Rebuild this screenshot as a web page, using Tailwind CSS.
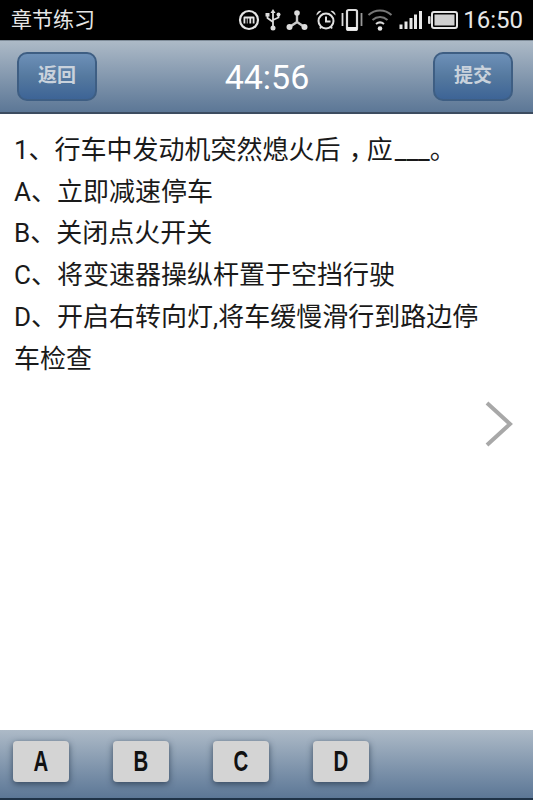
<!DOCTYPE html>
<html lang="zh-CN">
<head>
    <meta charset="UTF-8">
    <meta name="viewport" content="width=device-width, initial-scale=1.0">
    <title>章节练习</title>
    <script src="https://cdn.jsdelivr.net/npm/@tailwindcss/browser@4"></script>
</head>
<body class="bg-white overflow-hidden font-['Roboto','Noto_Sans_CJK_SC',sans-serif]">
<div class="flex flex-col w-[533px] h-[800px]">

    <!-- status bar -->
    <div class="flex items-center justify-between h-[40px] bg-black text-[#e6e6e6] shrink-0">
        <span class="ml-[11px] text-[21px] leading-none">章节练习</span>
        <div class="flex items-center mr-[10px]">
            <svg class="w-[22px] h-[22px]" viewBox="0 0 22 22" fill="none">
                <circle cx="11" cy="11" r="9" stroke="#e4e4e4" stroke-width="2.200"/>
                <path d="M5.500 14.500V8.500a1 1 0 0 1 1-1h9a1 1 0 0 1 1 1v6h-1.800V9.500h-1.500v5h-1.800v-5h-1.800v5H8.800v-5H7.300v5z" fill="#e4e4e4"/>
            </svg>
            <svg class="w-[16px] h-[24px] ml-[5px]" viewBox="0 0 16 24" fill="none" stroke="#ddd" stroke-width="1.800">
                <path d="M8 4v15M2.500 7.500v2.500l5.500 4M13.500 7v2.500L8 12"/>
                <path d="M8 1l2.500 4h-5z" fill="#ddd" stroke="none"/>
                <rect x="0.500" y="5" width="4" height="3.500" fill="#ddd" stroke="none"/>
                <circle cx="13.500" cy="6.500" r="2" fill="#ddd" stroke="none"/>
                <circle cx="8" cy="20" r="2.500" fill="#ddd" stroke="none"/>
            </svg>
            <svg class="w-[22px] h-[22px] ml-[5px]" viewBox="0 0 22 22" fill="none" stroke="#c8c8c8" stroke-width="2.400">
                <path d="M11 4v9L3.500 18M11 13l7.500 5"/>
                <circle cx="11" cy="4" r="2.800" fill="#ddd" stroke="none"/>
                <circle cx="3.500" cy="18" r="3" fill="#ddd" stroke="none"/>
                <circle cx="18.500" cy="18" r="3" fill="#ddd" stroke="none"/>
            </svg>
            <svg class="w-[22px] h-[22px] ml-[7px]" viewBox="0 0 22 22" fill="none" stroke="#e0e0e0" stroke-width="2">
                <circle cx="11" cy="12" r="7.500"/>
                <path d="M11 7.500v5h4.500M5 19.500l1.500-2M17 19.500l-1.500-2"/>
                <path d="M1.500 6.500a4 4 0 0 1 5-4.500zM20.500 6.500a4 4 0 0 0-5-4.500z" fill="#e0e0e0" stroke="none"/>
            </svg>
            <svg class="w-[22px] h-[24px] ml-[4px]" viewBox="0 0 22 24" fill="none" stroke="#ddd">
                <rect x="6" y="2" width="10" height="20" rx="1.500" stroke-width="2.200"/>
                <path d="M6 20.500h10" stroke="#f0f0f0" stroke-width="3"/>
                <path d="M1.500 5v13" stroke-width="1.800"/>
                <path d="M20.500 5v13" stroke="#999" stroke-width="1.800"/>
            </svg>
            <svg class="w-[26px] h-[24px] ml-[4px]" viewBox="0 0 26 24" fill="none" stroke="#777" stroke-width="2">
                <path d="M1.500 7c6.500-6 16.500-6 23 0M5.500 12c4.500-4 10.500-4 15 0"/>
                <path d="M9 16c2.500-2 5.500-2 8 0" stroke="#d8d8d8"/>
                <circle cx="13" cy="20.500" r="2.300" fill="#e8e8e8" stroke="none"/>
            </svg>
            <svg class="w-[24px] h-[20px] ml-[6px]" viewBox="0 0 24 20" fill="#e8e8e8">
                <rect x="0.500" y="14.500" width="3" height="4.500"/>
                <rect x="5.500" y="11.500" width="3" height="7.500"/>
                <rect x="10.500" y="8" width="3" height="11"/>
                <rect x="15" y="4.500" width="3" height="14.500"/>
                <rect x="20" y="1" width="3" height="18"/>
            </svg>
            <svg class="w-[30px] h-[20px] ml-[5px]" viewBox="0 0 30 20" fill="none">
                <rect x="0" y="6" width="2.500" height="8" rx="1" fill="#ddd"/>
                <rect x="4" y="2" width="25" height="16" rx="2" stroke="#e4e4e4" stroke-width="2"/>
                <rect x="6.500" y="4.500" width="20" height="11" fill="#cfcfcf"/>
            </svg>
            <span class="ml-[5px] text-[24px] leading-none">16:50</span>
        </div>
    </div>

    <!-- header -->
    <div class="flex items-center justify-between h-[74px] pl-[17px] pr-[20px] shrink-0 border-t border-[#7f8c99] border-b-2 border-b-[#3c4c60] bg-linear-to-b from-[#adbac7] to-[#5c7796]">
        <button class="flex items-center justify-center w-[80px] h-[49px] rounded-[10px] border-2 border-[#3e5e83] bg-linear-to-b from-[#6d90b8] via-[#55799f] to-[#3d6496] text-[#c9d2dc] text-[19px] font-bold">返回</button>
        <span class="ml-[4px] text-[34px] leading-none text-white">44:56</span>
        <button class="flex items-center justify-center w-[80px] h-[49px] rounded-[10px] border-2 border-[#3e5e83] bg-linear-to-b from-[#6d90b8] via-[#55799f] to-[#3d6496] text-[#c9d2dc] text-[19px] font-bold">提交</button>
    </div>

    <!-- question -->
    <div class="relative flex-1 bg-white pl-[14px] pr-[30px] pt-[16px] text-[26px] leading-[41.700px] text-[#1a1a1a]">
        <p>1、行车中发动机突然熄火后<span class="ml-[8px] tracking-[-8px]">，</span>应<span class="ml-[2px]">___</span>。</p>
        <p>A、立即减速停车</p>
        <p>B、关闭点火开关</p>
        <p>C、将变速器操纵杆置于空挡行驶</p>
        <p>D、开启右转向灯,将车缓慢滑行到路边停车检查</p>
        <svg class="absolute right-[19px] top-[286px] w-[30px] h-[48px]" viewBox="0 0 30 48" fill="none" stroke="#a8a8a8" stroke-width="4">
            <path d="M3 3l23 21L3 45"/>
        </svg>
    </div>

    <!-- answer bar -->
    <div class="flex items-center gap-[44px] h-[70px] pl-[13px] pb-[6px] shrink-0 border-b-2 border-b-[#1f3348] bg-linear-to-b from-[#adbac7] to-[#5c7796]">
        <button class="w-[56px] h-[41px] rounded-[4px] bg-[#d4d4d4] shadow-[0_2px_6px_rgba(30,45,65,0.7)] text-[#111] text-[30px] leading-none font-bold font-['Liberation_Sans',sans-serif]"><span class="inline-block scale-x-[.68]">A</span></button>
        <button class="w-[56px] h-[41px] rounded-[4px] bg-[#d4d4d4] shadow-[0_2px_6px_rgba(30,45,65,0.7)] text-[#111] text-[30px] leading-none font-bold font-['Liberation_Sans',sans-serif]"><span class="inline-block scale-x-[.68]">B</span></button>
        <button class="w-[56px] h-[41px] rounded-[4px] bg-[#d4d4d4] shadow-[0_2px_6px_rgba(30,45,65,0.7)] text-[#111] text-[30px] leading-none font-bold font-['Liberation_Sans',sans-serif]"><span class="inline-block scale-x-[.68]">C</span></button>
        <button class="w-[56px] h-[41px] rounded-[4px] bg-[#d4d4d4] shadow-[0_2px_6px_rgba(30,45,65,0.7)] text-[#111] text-[30px] leading-none font-bold font-['Liberation_Sans',sans-serif]"><span class="inline-block scale-x-[.68]">D</span></button>
    </div>
</div>
</body>
</html>
